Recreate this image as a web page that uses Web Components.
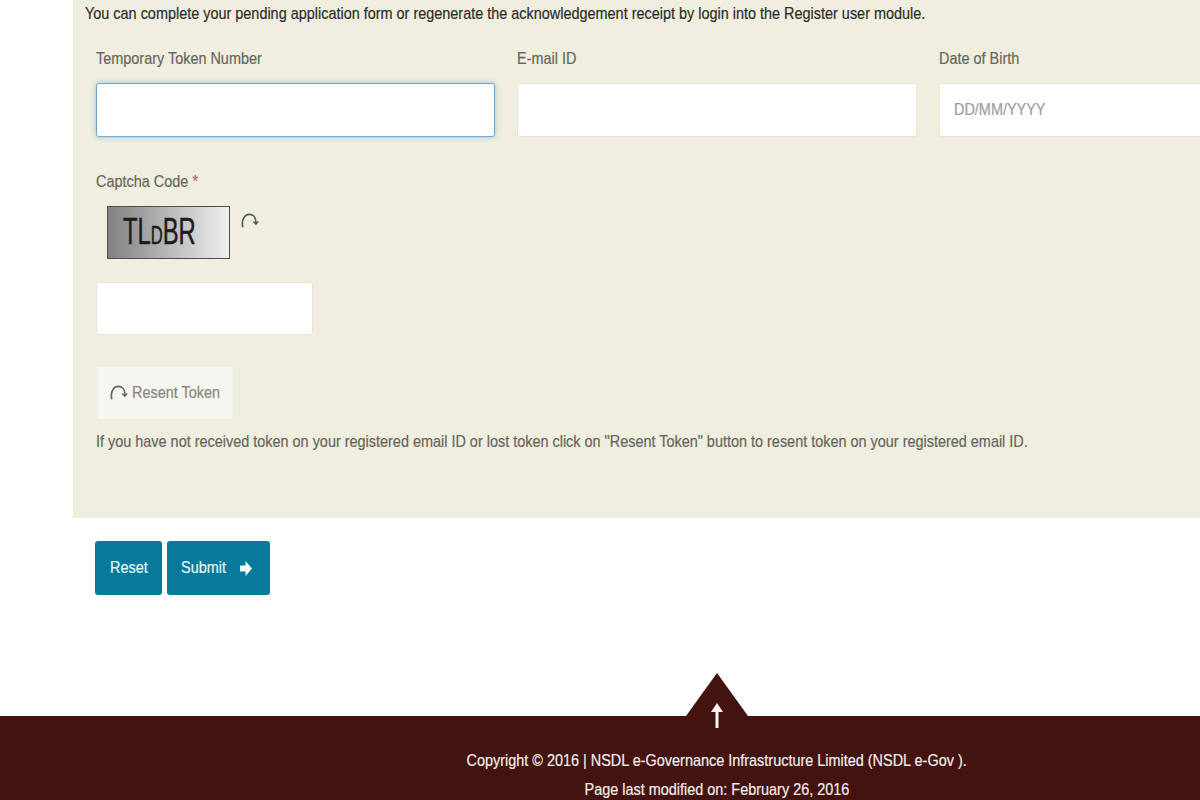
<!DOCTYPE html>
<html>
<head>
<meta charset="utf-8">
<title>Register user</title>
<style>
  html, body { margin: 0; height: 800px; overflow: hidden; background: #ffffff; }
  body { display: flex; flex-direction: column; font-family: "Liberation Sans", Arial, sans-serif; }
</style>
</head>
<body>
<token-page></token-page>
<script>
const refreshIcon = (size) => `<svg width="${size}" height="${size}" viewBox="0 0 20 20" fill="none"><path d="M3 16 C1 8.500 5 2.500 10 2.500 C14 2.500 16.500 6 16.800 10" stroke="currentColor" stroke-width="1.800"/><path d="M13 10 L20 10 L16.800 14 Z" fill="currentColor"/></svg>`;

// the screenshot is squeezed sideways, all text is 17px at this width
const squeeze = `
  .sq {
    display: inline-block;
    white-space: nowrap;
    transform: scaleX(0.849);
    transform-origin: left center;
    -webkit-text-stroke: 0.2px currentColor;
  }`;

class FormField extends HTMLElement {
    constructor() {
        super();
        this.attachShadow({ mode: 'open' });
    }

    connectedCallback() {
        const label = this.getAttribute('label');
        const placeholder = this.getAttribute('placeholder') || '';
        const required = this.hasAttribute('required') ? '<span class="star">*</span>' : '';
        this.shadowRoot.innerHTML = `
<style>
  ${squeeze}
  :host { display: block; width: var(--field-width, 400px); flex: none; }
  label {
    display: block;
    height: 20px;
    line-height: 20px;
    margin-bottom: 14px;
    font-size: 17px;
    color: #66665c;
  }
  .star { color: #b5655f; margin-left: 5px; }
  .box {
    display: flex;
    align-items: center;
    box-sizing: border-box;
    height: 54px;
    padding: 0 14px;
    background: #ffffff;
    border: 1px solid #e6e4d6;
    border-radius: 3px;
    font-size: 17px;
    color: #9a9ca0;
  }
  :host([focused]) .box {
    border-color: #6fa9cf;
    box-shadow: 0 0 5px rgba(102, 175, 233, 0.7);
  }
  :host([bare]) label { margin-bottom: 0; }
  :host([bare]) .box { display: none; }
</style>
<label><span class="sq">${label}${required}</span></label>
<div class="box"><span class="sq">${placeholder}</span></div>`;
    }
}

class CaptchaBox extends HTMLElement {
    constructor() {
        super();
        this.attachShadow({ mode: 'open' });
        this.shadowRoot.innerHTML = `
<style>
  :host { display: flex; align-items: flex-start; margin-left: 11px; }
  .code {
    box-sizing: border-box;
    width: 123px;
    height: 53px;
    padding-left: 15px;
    border: 1px solid #4f4f4c;
    background: linear-gradient(90deg, #808080, #f0f0f0);
    color: #1c1c1c;
    font-size: 36px;
    line-height: 49px;
    white-space: nowrap;
    overflow: hidden;
  }
  .code span.text {
    display: inline-block;
    transform: scaleX(0.66);
    transform-origin: left center;
    -webkit-text-stroke: 0.5px #1c1c1c;
  }
  .small { font-size: 25px; }
  .again { margin: 6px 0 0 10px; color: #5a5a55; height: 19px; }
</style>
<div class="code"><span class="text">TL<span class="small">D</span>BR</span></div>
<div class="again">${refreshIcon(19)}</div>`;
    }
}

class AppButton extends HTMLElement {
    constructor() {
        super();
        this.attachShadow({ mode: 'open' });
        this.shadowRoot.innerHTML = `
<style>
  :host {
    display: flex;
    align-items: center;
    gap: 5px;
    box-sizing: border-box;
    height: 54px;
    padding-left: 14px;
    background: #07799a;
    border-radius: 3px;
    color: #e6f6f8;
    font-size: 17px;
    white-space: nowrap;
  }
  :host([plain]) {
    padding-left: 12px;
    gap: 4px;
    background: #f7f5ef;
    border: 1px solid #ecebdf;
    color: #87877f;
  }
</style>
<slot name="before"></slot><slot></slot><slot name="after"></slot>`;
    }
}

class SiteFooter extends HTMLElement {
    constructor() {
        super();
        this.attachShadow({ mode: 'open' });
        this.shadowRoot.innerHTML = `
<style>
  :host {
    display: block;
    position: relative;
    height: 84px;
    box-sizing: border-box;
    padding: 30px 0 0 234px;
    background: #43130f;
    color: #f4eeea;
    font-size: 17px;
    line-height: 29px;
  }
  .top { position: absolute; left: 686px; top: -44px; display: block; }
  p { margin: 0; text-align: center; white-space: nowrap; }
  span { display: inline-block; transform: scaleX(0.849); -webkit-text-stroke: 0.2px currentColor; }
</style>
<svg class="top" width="62" height="58" viewBox="0 0 62 58">
  <path d="M31 1 L62 44 L62 58 L0 58 L0 44 Z" fill="#43130f"/>
  <path d="M31 31 L37 40 L32.500 40 L32.500 56 L29.500 56 L29.500 40 L25 40 Z" fill="#fdf6f2"/>
</svg>
<p><span>Copyright © 2016 | NSDL e-Governance Infrastructure Limited (NSDL e-Gov ).</span></p>
<p><span>Page last modified on: February 26, 2016</span></p>`;
    }
}

class TokenPage extends HTMLElement {
    constructor() {
        super();
        this.attachShadow({ mode: 'open' });
        this.shadowRoot.innerHTML = `
<style>
  ${squeeze}
  :host { display: flex; flex-direction: column; height: 800px; overflow: hidden; }
  .panel {
    box-sizing: border-box;
    height: 518px;
    margin-left: 73px;
    padding: 4px 0 0 12px;
    background: #f0eede;
  }
  .intro {
    margin: 0 0 25px;
    height: 20px;
    line-height: 20px;
    font-size: 17px;
    color: #2d2d2a;
  }
  .inner { padding-left: 11px; }
  .row { display: flex; gap: 22px; width: 1300px; }
  .captcha-label { margin-top: 35px; }
  captcha-box { margin-top: 14px; }
  .input {
    box-sizing: border-box;
    width: 217px;
    height: 53px;
    margin-top: 23px;
    background: #ffffff;
    border: 1px solid #e6e4d6;
    border-radius: 3px;
  }
  .resend { width: 138px; margin-top: 31px; }
  .resend svg { display: block; color: #64645e; }
  .hint {
    margin: 12px 0 0;
    height: 20px;
    line-height: 20px;
    font-size: 17px;
    color: #66665e;
  }
  .actions { display: flex; gap: 5px; margin: 23px 0 0 95px; }
  .reset { width: 67px; padding-left: 15px; }
  .submit { width: 103px; gap: 6px; }
  .submit .sq { width: 53px; }
  .spacer { flex: 1; }
</style>
<section class="panel">
  <p class="intro"><span class="sq">You can complete your pending application form or regenerate the acknowledgement receipt by login into the Register user module.</span></p>
  <div class="inner">
    <div class="row">
      <form-field label="Temporary Token Number" focused style="--field-width:399px"></form-field>
      <form-field label="E-mail ID"></form-field>
      <form-field label="Date of Birth" placeholder="DD/MM/YYYY"></form-field>
    </div>
    <form-field class="captcha-label" label="Captcha Code" required bare></form-field>
    <captcha-box></captcha-box>
    <div class="input"></div>
    <app-button class="resend" plain>
      <span slot="before">${refreshIcon(19)}</span><span class="sq">Resent Token</span>
    </app-button>
    <p class="hint"><span class="sq">If you have not received token on your registered email ID or lost token click on "Resent Token" button to resent token on your registered email ID.</span></p>
  </div>
</section>
<div class="actions">
  <app-button class="reset"><span class="sq">Reset</span></app-button>
  <app-button class="submit"><span class="sq">Submit</span>
    <svg slot="after" width="12" height="15" viewBox="0 0 12 15"><path d="M0 4.500 L5.500 4.500 L5.500 0 L12 7.500 L5.500 15 L5.500 10.500 L0 10.500 Z" fill="#f2fbfc"/></svg>
  </app-button>
</div>
<div class="spacer"></div>
<site-footer></site-footer>`;
    }
}

customElements.define('form-field', FormField);
customElements.define('captcha-box', CaptchaBox);
customElements.define('app-button', AppButton);
customElements.define('site-footer', SiteFooter);
customElements.define('token-page', TokenPage);
</script>
</body>
</html>
